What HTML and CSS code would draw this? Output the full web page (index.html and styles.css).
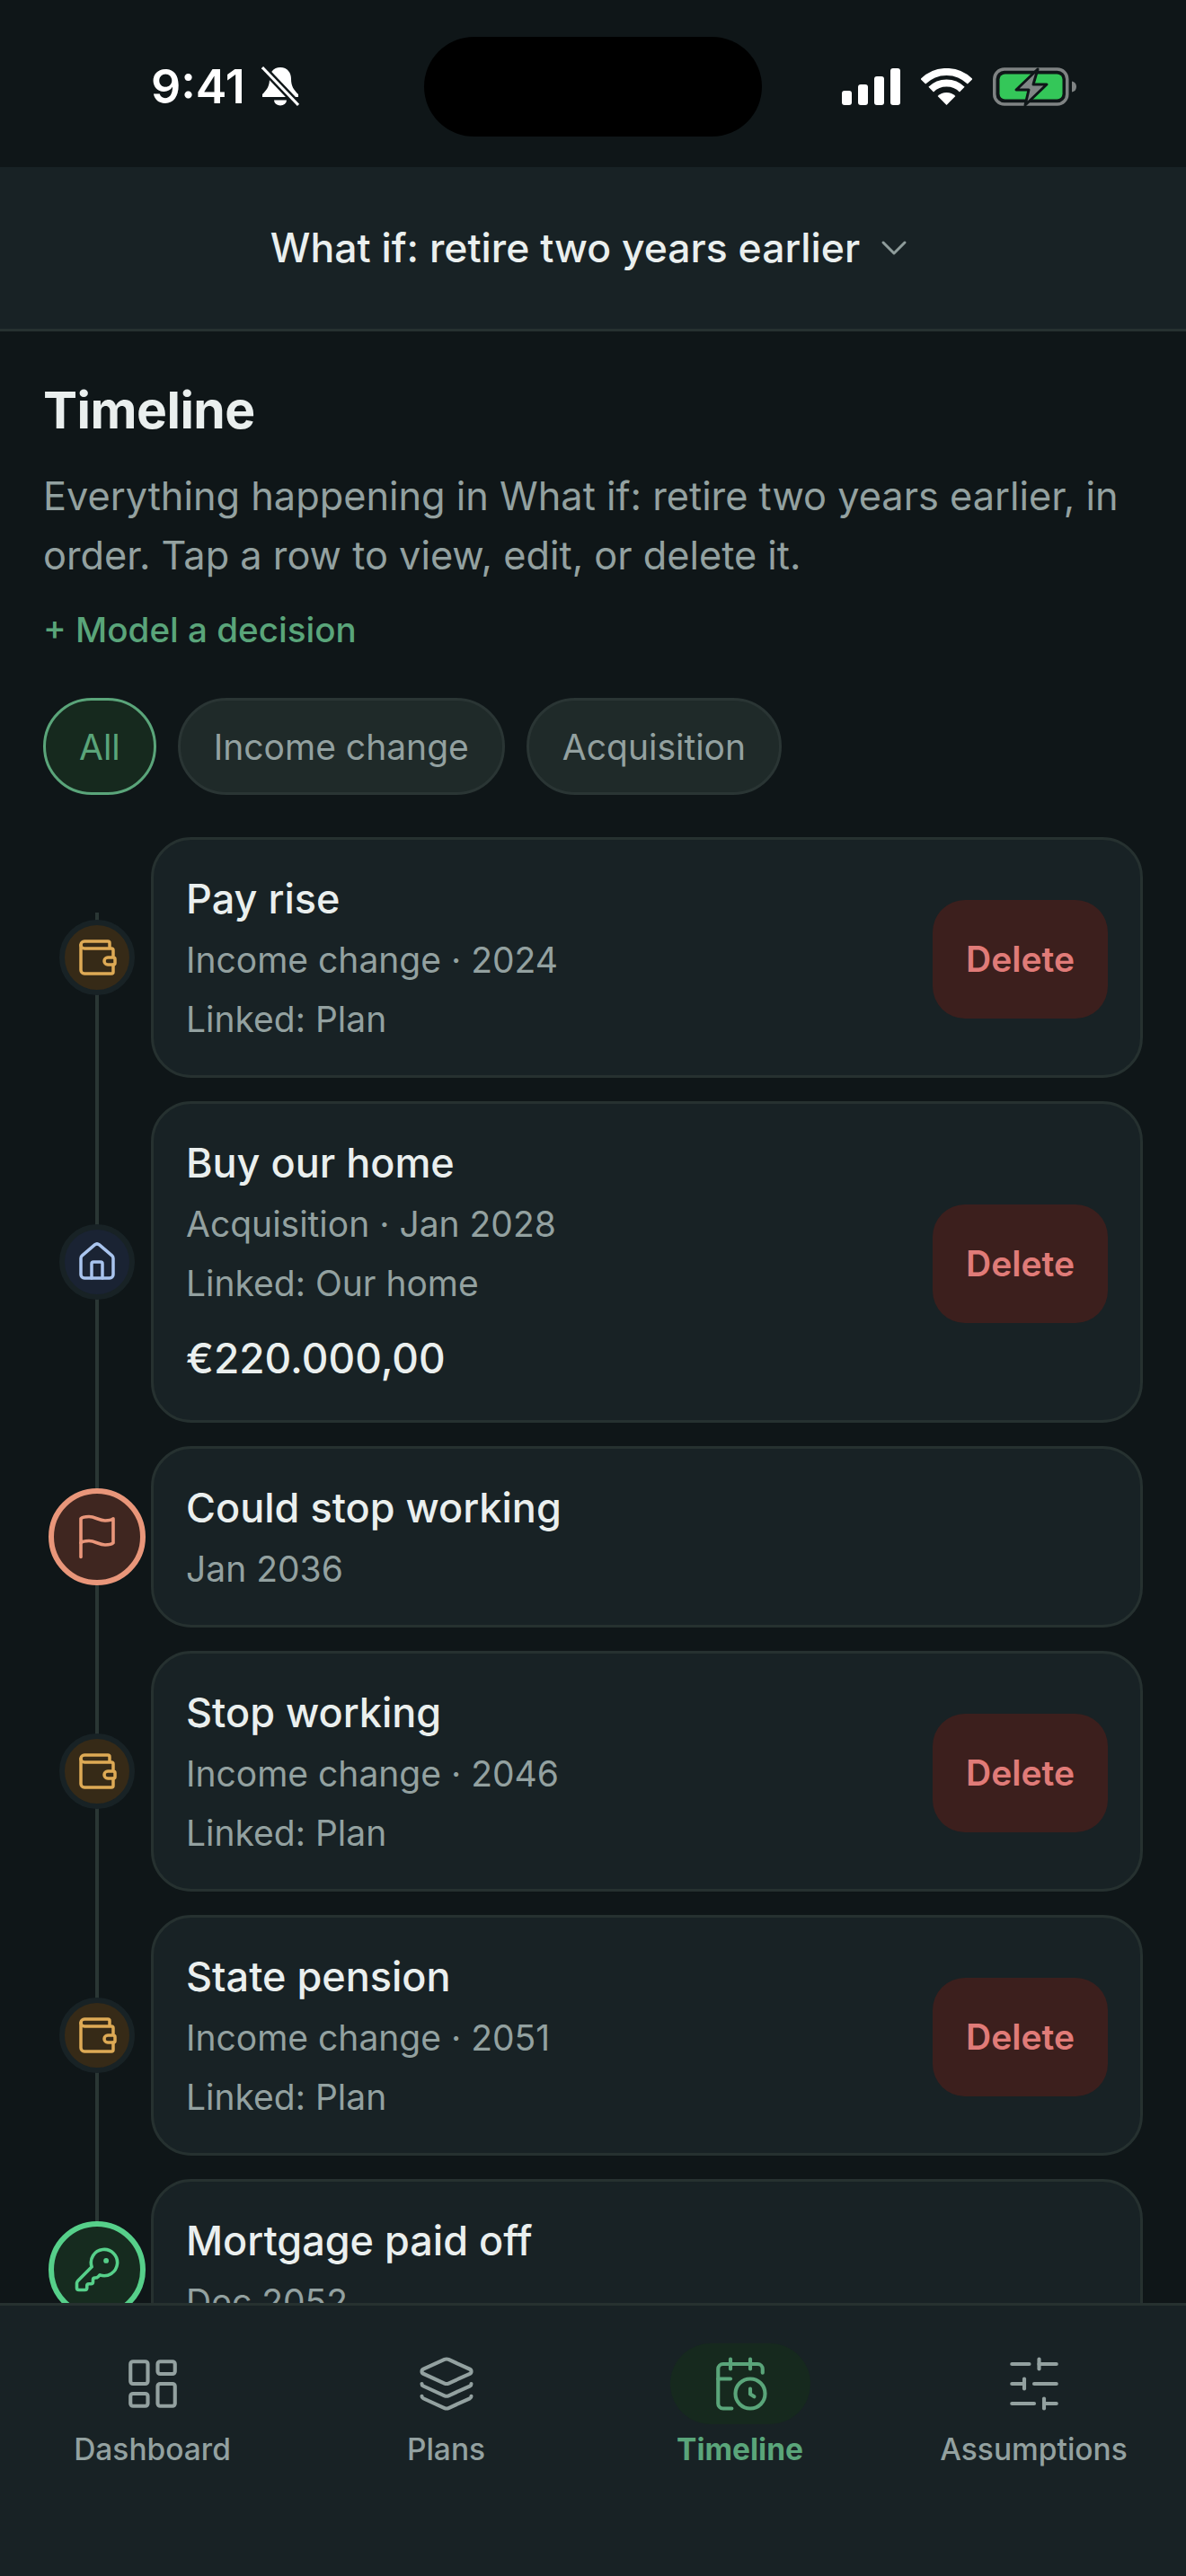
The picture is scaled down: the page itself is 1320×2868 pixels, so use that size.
FILE: index.html
```html
<!DOCTYPE html>
<html lang="en">
<head>
    <meta charset="UTF-8">
    <title>Timeline</title>
    <link rel="stylesheet" href="styles.css">
</head>
<body>
    <svg class="defs" width="0" height="0">
        <symbol id="i-wallet" viewBox="0 0 24 24"><path d="M19 7V4a1 1 0 0 0-1-1H5a2 2 0 0 0 0 4h15a1 1 0 0 1 1 1v4h-3a2 2 0 0 0 0 4h3a1 1 0 0 0 1-1v-2a1 1 0 0 0-1-1"/><path d="M3 5v14a2 2 0 0 0 2 2h15a1 1 0 0 0 1-1v-4"/></symbol>
        <symbol id="i-house" viewBox="0 0 24 24"><path d="M15 21v-8a1 1 0 0 0-1-1h-4a1 1 0 0 0-1 1v8"/><path d="M3 10a2 2 0 0 1 .709-1.528l7-5.999a2 2 0 0 1 2.582 0l7 5.999A2 2 0 0 1 21 10v9a2 2 0 0 1-2 2H5a2 2 0 0 1-2-2z"/></symbol>
        <symbol id="i-flag" viewBox="0 0 24 24"><path d="M4 15s1-1 4-1 5 2 8 2 4-1 4-1V3s-1 1-4 1-5-2-8-2-4 1-4 1z"/><path d="M4 22v-7"/></symbol>
        <symbol id="i-key" viewBox="0 0 24 24"><path d="M2.586 17.414A2 2 0 0 0 2 18.828V21a1 1 0 0 0 1 1h3a1 1 0 0 0 1-1v-1a1 1 0 0 1 1-1h1a1 1 0 0 0 1-1v-1a1 1 0 0 1 1-1h.172a2 2 0 0 0 1.414-.586l.814-.814a6.5 6.5 0 1 0-4-4z"/><circle cx="16.5" cy="7.5" r=".5" fill="currentColor"/></symbol>
    </svg>

    <div class="status">
        <div class="status-left">
            <span class="clock">9:41</span>
            <svg class="bell" viewBox="0 0 42 45">
                <path fill="#fff" d="M21 1C13 1 9 7 9 14C9 22 6 26 1 31V34H41V31C36 26 33 22 33 14C33 7 29 1 21 1Z"/>
                <path fill="#fff" d="M14 37.500a7 6 0 0 0 14 0Z"/>
                <path stroke="#0f1618" stroke-width="8" d="M1 1L41 43"/>
                <path stroke="#fff" stroke-width="3" d="M1 1L41 43"/>
            </svg>
        </div>
        <div class="island"></div>
        <div class="status-right">
            <svg class="signal" viewBox="0 0 65 41" fill="#fff">
                <rect x="0" y="25" width="11" height="16" rx="3"/>
                <rect x="18" y="18" width="11" height="23" rx="3"/>
                <rect x="36" y="9" width="11" height="32" rx="3"/>
                <rect x="54" y="0" width="11" height="41" rx="3"/>
            </svg>
            <svg class="wifi" viewBox="0 0 57 41">
                <path fill="none" stroke="#fff" stroke-width="8" d="M2.300 14.800A37 37 0 0 1 54.700 14.800"/>
                <path fill="none" stroke="#fff" stroke-width="8" d="M11.200 23.700A24.500 24.500 0 0 1 45.800 23.700"/>
                <path fill="#fff" d="M28.500 41L18.600 31.100A14 14 0 0 1 38.400 31.100Z"/>
            </svg>
            <svg class="battery" viewBox="0 0 93 45">
                <rect x="1.750" y="3" width="81" height="39" rx="11" fill="none" stroke="#7f8383" stroke-width="3.500"/>
                <rect x="7.500" y="8.500" width="70" height="28" rx="6" fill="#34c759"/>
                <path d="M88 16.500c3 .5 5 2.500 5 6s-2 5.500-5 6z" fill="#7f8383"/>
                <path d="M50 3L26 26H40L36 43L60 20H45Z" fill="#808585" stroke="#0f1618" stroke-width="3" stroke-linejoin="round"/>
            </svg>
        </div>
    </div>

    <div class="picker">
        <span>What if: retire two years earlier</span>
        <svg class="icon chevron" viewBox="0 0 24 24"><path d="m6 9 6 6 6-6"/></svg>
    </div>

    <div class="main">
        <h1>Timeline</h1>
        <p class="lead">Everything happening in What if: retire two years earlier, in order. Tap a row to view, edit, or delete it.</p>
        <a class="add-link">+ Model a decision</a>

        <div class="chips">
            <span class="chip chip-on">All</span>
            <span class="chip">Income change</span>
            <span class="chip">Acquisition</span>
        </div>

        <div class="list">
            <div class="row">
                <div class="node-col"><div class="node node-wallet"><svg class="icon"><use href="#i-wallet"/></svg></div></div>
                <div class="card">
                    <div class="card-text">
                        <div class="card-title">Pay rise</div>
                        <div class="card-meta">Income change · 2024</div>
                        <div class="card-meta">Linked: Plan</div>
                    </div>
                    <button class="del" type="button">Delete</button>
                </div>
            </div>
            <div class="row">
                <div class="node-col"><div class="node node-home"><svg class="icon"><use href="#i-house"/></svg></div></div>
                <div class="card">
                    <div class="card-text">
                        <div class="card-title">Buy our home</div>
                        <div class="card-meta">Acquisition · Jan 2028</div>
                        <div class="card-meta">Linked: Our home</div>
                        <div class="card-amount">€220.000,00</div>
                    </div>
                    <button class="del" type="button">Delete</button>
                </div>
            </div>
            <div class="row">
                <div class="node-col"><div class="node node-big node-flag"><svg class="icon"><use href="#i-flag"/></svg></div></div>
                <div class="card">
                    <div class="card-text">
                        <div class="card-title">Could stop working</div>
                        <div class="card-meta">Jan 2036</div>
                    </div>
                </div>
            </div>
            <div class="row">
                <div class="node-col"><div class="node node-wallet"><svg class="icon"><use href="#i-wallet"/></svg></div></div>
                <div class="card">
                    <div class="card-text">
                        <div class="card-title">Stop working</div>
                        <div class="card-meta">Income change · 2046</div>
                        <div class="card-meta">Linked: Plan</div>
                    </div>
                    <button class="del" type="button">Delete</button>
                </div>
            </div>
            <div class="row">
                <div class="node-col"><div class="node node-wallet"><svg class="icon"><use href="#i-wallet"/></svg></div></div>
                <div class="card">
                    <div class="card-text">
                        <div class="card-title">State pension</div>
                        <div class="card-meta">Income change · 2051</div>
                        <div class="card-meta">Linked: Plan</div>
                    </div>
                    <button class="del" type="button">Delete</button>
                </div>
            </div>
            <div class="row">
                <div class="node-col"><div class="node node-big node-key"><svg class="icon"><use href="#i-key"/></svg></div></div>
                <div class="card">
                    <div class="card-text">
                        <div class="card-title">Mortgage paid off</div>
                        <div class="card-meta">Dec 2052</div>
                    </div>
                </div>
            </div>
        </div>
    </div>

    <div class="tabs">
        <div class="tab">
            <div class="tab-icon">
                <svg class="icon" viewBox="0 0 24 24"><rect width="7" height="9" x="3" y="3" rx="1"/><rect width="7" height="5" x="14" y="3" rx="1"/><rect width="7" height="9" x="14" y="12" rx="1"/><rect width="7" height="5" x="3" y="16" rx="1"/></svg>
            </div>
            <span>Dashboard</span>
        </div>
        <div class="tab">
            <div class="tab-icon">
                <svg class="icon" viewBox="0 0 24 24"><path d="M12.830 2.180a2 2 0 0 0-1.660 0L2.600 6.080a1 1 0 0 0 0 1.830l8.580 3.910a2 2 0 0 0 1.660 0l8.580-3.900a1 1 0 0 0 0-1.830z"/><path d="M2 12a1 1 0 0 0 .58.91l8.600 3.910a2 2 0 0 0 1.650 0l8.580-3.900A1 1 0 0 0 22 12"/><path d="M2 17a1 1 0 0 0 .58.91l8.600 3.910a2 2 0 0 0 1.650 0l8.580-3.900A1 1 0 0 0 22 17"/></svg>
            </div>
            <span>Plans</span>
        </div>
        <div class="tab tab-on">
            <div class="tab-icon">
                <svg class="icon" viewBox="0 0 24 24"><path d="M16 14v2.200l1.600 1"/><path d="M16 2v4"/><path d="M21 7.500V6a2 2 0 0 0-2-2H5a2 2 0 0 0-2 2v14a2 2 0 0 0 2 2h3.500"/><path d="M3 10h5"/><path d="M8 2v4"/><circle cx="16" cy="16" r="6"/></svg>
            </div>
            <span>Timeline</span>
        </div>
        <div class="tab">
            <div class="tab-icon">
                <svg class="icon" viewBox="0 0 24 24"><path d="M21 4h-7"/><path d="M10 4H3"/><path d="M21 12h-9"/><path d="M8 12H3"/><path d="M21 20h-5"/><path d="M12 20H3"/><path d="M14 2v4"/><path d="M8 10v4"/><path d="M16 18v4"/></svg>
            </div>
            <span>Assumptions</span>
        </div>
    </div>
</body>
</html>
```

FILE: styles.css
```css
* {
    box-sizing: border-box;
}
html, body {
    margin: 0;
    height: 100%;
}
body {
    width: 1320px;
    height: 2868px;
    display: flex;
    flex-direction: column;
    overflow: hidden;
    background-color: #0f1618;
    color: #eaefee;
    font-family: Inter, "Liberation Sans", sans-serif;
}
.defs {
    position: absolute;
}
.icon {
    fill: none;
    stroke: currentColor;
    stroke-width: 2;
    stroke-linecap: round;
    stroke-linejoin: round;
}

/* status bar */
.status {
    flex: none;
    height: 186px;
    padding: 6px 122px 0 168px;
    display: flex;
    align-items: center;
    justify-content: space-between;
    position: relative;
}
.status-left {
    display: flex;
    align-items: center;
    gap: 18px;
}
.clock {
    font-size: 52px;
    font-weight: 600;
    color: #fff;
}
.bell {
    width: 42px;
    height: 45px;
}
.island {
    position: absolute;
    left: 472px;
    top: 41px;
    width: 376px;
    height: 111px;
    border-radius: 56px;
    background-color: #000;
}
.status-right {
    display: flex;
    align-items: center;
}
.signal {
    width: 65px;
    height: 41px;
}
.wifi {
    width: 57px;
    height: 41px;
    margin-left: 23px;
}
.battery {
    width: 93px;
    height: 45px;
    margin-left: 23px;
}

/* plan picker */
.picker {
    flex: none;
    height: 183px;
    display: flex;
    align-items: center;
    justify-content: center;
    gap: 14px;
    background-color: #182225;
    border-bottom: 3px solid #263130;
    font-size: 44.500px;
    font-weight: 500;
}
.chevron {
    width: 48px;
    height: 48px;
    color: #8e9c9b;
    stroke-width: 1.5;
}

/* content */
.main {
    flex: 1;
    min-height: 0;
    overflow: hidden;
    padding: 52px 48px 0;
}
h1 {
    margin: 0;
    font-size: 57px;
    font-weight: 700;
    line-height: 72px;
    letter-spacing: -0.5px;
}
.lead {
    margin: 26px 0 0;
    font-size: 43.300px;
    line-height: 66px;
    color: #93a1a0;
}
.add-link {
    display: block;
    margin-top: 19px;
    font-size: 38.600px;
    line-height: 63px;
    font-weight: 500;
    color: #5aa57a;
}
.chips {
    margin-top: 44px;
    display: flex;
    gap: 24px;
}
.chip {
    height: 108px;
    padding: 0 37px;
    display: flex;
    align-items: center;
    border: 3px solid #2a3534;
    border-radius: 54px;
    background-color: #1f2a29;
    font-size: 39px;
    color: #93a1a0;
}
.chip-on {
    border-color: #5aa57a;
    background-color: #16291e;
    color: #5aa57a;
}

/* timeline */
.list {
    margin-top: 47px;
    display: flex;
    flex-direction: column;
    gap: 26px;
    position: relative;
}
.list::before {
    content: "";
    position: absolute;
    left: 58px;
    top: 84px;
    bottom: 0;
    width: 4px;
    background-color: #2a3634;
}
.row {
    display: flex;
}
.node-col {
    flex: none;
    width: 120px;
    display: flex;
    align-items: center;
    justify-content: center;
    position: relative;
}
.node {
    width: 84px;
    height: 84px;
    display: flex;
    align-items: center;
    justify-content: center;
    border: 6px solid #182225;
    border-radius: 50%;
}
.node .icon {
    width: 48px;
    height: 48px;
    stroke-width: 1.75;
}
.node-wallet {
    background-color: #362a17;
    color: #deaa55;
}
.node-home {
    background-color: #1a2333;
    color: #a9c4ee;
}
.node-big {
    width: 108px;
    height: 108px;
}
.node-big .icon {
    width: 54px;
    height: 54px;
    stroke-width: 1.6;
}
.node-flag {
    border-color: #e9967a;
    background-color: #3f2620;
    color: #e9967a;
}
.node-key {
    border-color: #56d08a;
    background-color: #162b1f;
    color: #56d08a;
}
.card {
    flex: 1;
    display: flex;
    align-items: center;
    justify-content: space-between;
    padding: 33px 36px 30px;
    border: 3px solid #263130;
    border-radius: 45px;
    background-color: #182225;
}
.card-title {
    font-size: 45px;
    font-weight: 500;
    line-height: 66px;
    margin-bottom: 3px;
}
.card-meta {
    font-size: 39px;
    line-height: 64px;
    color: #93a1a0;
}
.card-meta + .card-meta {
    margin-top: 2px;
}
.card-amount {
    margin: 15px 0 3px;
    font-size: 46px;
    font-weight: 500;
    line-height: 72px;
}
.del {
    width: 195px;
    height: 132px;
    border: 0;
    border-radius: 36px;
    background-color: #3c1f1d;
    color: #e07b78;
    font-family: inherit;
    font-size: 39px;
    font-weight: 600;
}

/* tab bar */
.tabs {
    flex: none;
    height: 304px;
    padding: 42px 6px 0;
    display: flex;
    align-items: flex-start;
    background-color: #182225;
    border-top: 3px solid #263130;
    position: relative;
}
.tab {
    flex: 1;
    display: flex;
    flex-direction: column;
    align-items: center;
    font-size: 33.500px;
    font-weight: 500;
    line-height: 56px;
    color: #93a1a0;
}
.tab-icon {
    width: 156px;
    height: 90px;
    display: flex;
    align-items: center;
    justify-content: center;
    border-radius: 45px;
}
.tab-icon .icon {
    width: 66px;
    height: 66px;
    stroke-width: 1.5;
}
.tab-on {
    color: #5aa57a;
    font-weight: 700;
}
.tab-on .tab-icon {
    background-color: #16291e;
}
```
